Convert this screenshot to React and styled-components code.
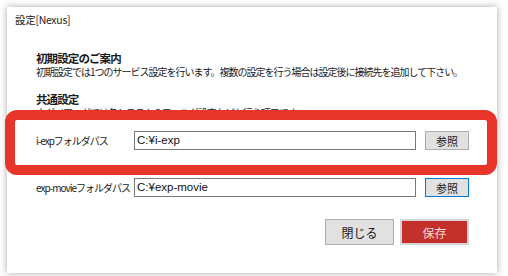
import React from 'react';
import styled, { createGlobalStyle } from 'styled-components';

const Global = createGlobalStyle`
  body {
    margin: 0;
    background: #ffffff;
    font-family: "Noto Sans CJK JP", "Noto Sans", sans-serif;
    color: #1a1a1a;
  }
`;

const Page = styled.div`
  width: 508px;
  height: 276px;
  padding: 7px;
  box-sizing: border-box;
`;

const Window = styled.div`
  position: relative;
  width: 490px;
  height: 266px;
  background: #ffffff;
  box-shadow: 0 0 7px rgba(0, 0, 0, 0.35);
  display: flex;
  flex-direction: column;
`;

const Title = styled.div`
  padding: 5px 0 0 8px;
  font-size: 10.5px;
  line-height: 16px;
  letter-spacing: -0.3px;
  color: #222;
`;

const Content = styled.div`
  margin-top: 23px;
  padding-left: 29px;
`;

const Heading = styled.div`
  font-size: 11.5px;
  font-weight: 700;
  line-height: 14px;
  letter-spacing: -0.9px;
  margin-top: ${({ gap }) => gap || 0}px;
`;

const Text = styled.div`
  font-size: 10px;
  line-height: 14px;
  letter-spacing: -1px;
  white-space: nowrap;
`;

const Row = styled.div`
  display: flex;
  align-items: center;
  height: 19px;
  margin-top: ${({ gap }) => gap}px;
  padding-left: 29px;
`;

const Label = styled.div`
  width: 98px;
  font-size: 10px;
  letter-spacing: -1px;
  white-space: nowrap;
`;

const Input = styled.div`
  width: 282px;
  height: 19px;
  box-sizing: border-box;
  border: 1px solid #7a7a7a;
  padding-left: 2px;
  font-family: "Liberation Sans", Arial, sans-serif;
  font-size: 11.5px;
  line-height: 17px;
  color: #111;
`;

const Browse = styled.button`
  margin-left: 9px;
  width: 44px;
  height: 19px;
  padding: 0;
  box-sizing: border-box;
  background: #e1e1e1;
  border: 1px solid ${({ focused }) => (focused ? '#0078d7' : '#adadad')};
  font-family: "Noto Sans CJK JP", sans-serif;
  font-size: 11px;
  color: #222;
`;

const Footer = styled.div`
  display: flex;
  justify-content: flex-end;
  gap: 6px;
  margin-top: 22px;
  padding-right: 28px;
`;

const Action = styled.button`
  width: 69px;
  height: 26px;
  padding: 0;
  box-sizing: border-box;
  background: ${({ primary }) => (primary ? '#c4302b' : '#e1e1e1')};
  border: ${({ primary }) => (primary ? '2px solid #d4d4d4' : '1px solid #adadad')};
  color: ${({ primary }) => (primary ? '#f4dcda' : '#1a1a1a')};
  font-family: "Noto Sans CJK JP", sans-serif;
  font-size: 12px;
`;

const Highlight = styled.div`
  position: absolute;
  left: -2px;
  top: 103px;
  width: 492px;
  height: 65px;
  box-sizing: border-box;
  border: 10px solid #e8352a;
  border-radius: 12px;
  pointer-events: none;
`;

export default function App() {
  return (
    <Page>
      <Global />
      <Window>
        <Title>設定[Nexus]</Title>
        <Content>
          <Heading>初期設定のご案内</Heading>
          <Text>初期設定では1つのサービス設定を行います。複数の設定を行う場合は設定後に接続先を追加して下さい。</Text>
          <Heading gap={13}>共通設定</Heading>
          <Text>本ダイアログでは各システムのフォルダ設定などを行う項目です。</Text>
        </Content>
        <Row gap={11}>
          <Label>i-expフォルダパス</Label>
          <Input>C:¥i-exp</Input>
          <Browse>参照</Browse>
        </Row>
        <Row gap={28}>
          <Label>exp-movieフォルダパス</Label>
          <Input>C:¥exp-movie</Input>
          <Browse focused>参照</Browse>
        </Row>
        <Footer>
          <Action>閉じる</Action>
          <Action primary>保存</Action>
        </Footer>
        <Highlight />
      </Window>
    </Page>
  );
}
